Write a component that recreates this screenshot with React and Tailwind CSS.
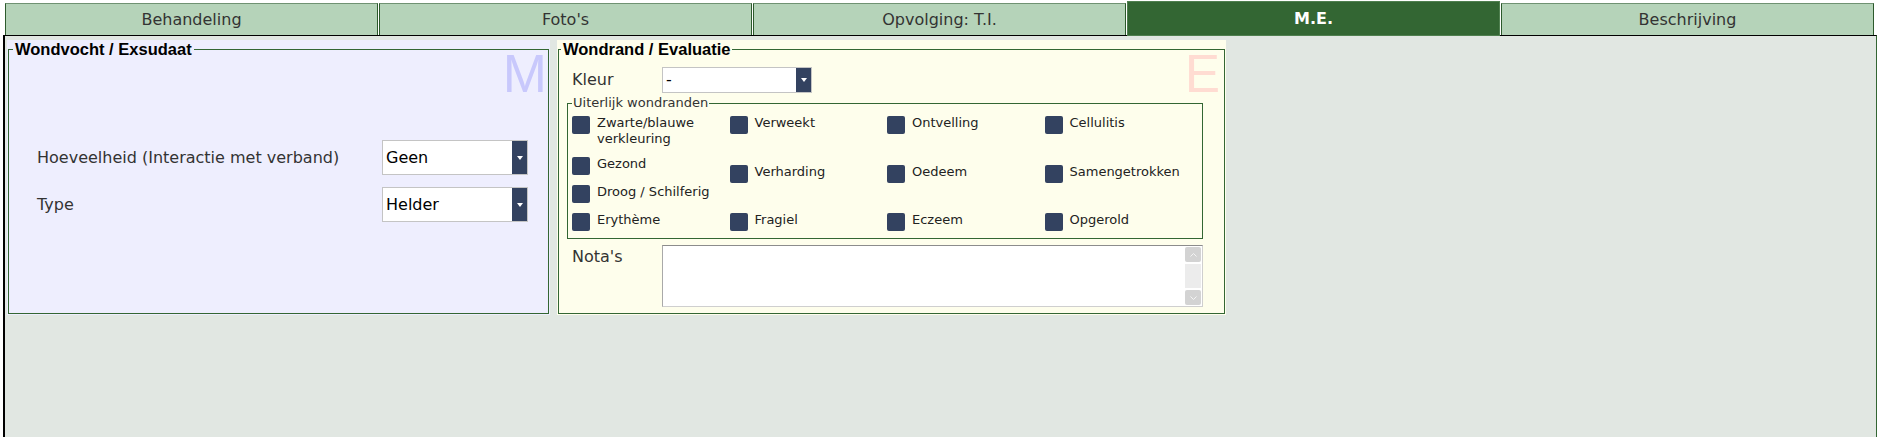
import React from "react";

const tabs = ["Behandeling", "Foto's", "Opvolging: T.I.", "M.E.", "Beschrijving"];
const activeTab = "M.E.";

const font = "font-['DejaVu_Sans',Verdana,sans-serif]";

const Dropdown = ({ value, className }) => (
  <div className={`flex bg-white border border-[#c4c4c4] ${className}`}>
    <span className="flex-1 flex items-center pl-[3px] text-black text-[16px]">{value}</span>
    <span className="w-[15px] bg-[#334260] flex items-center justify-center">
      <svg width="6" height="4" viewBox="0 0 6 4">
        <path d="M0 0h6L3 4z" fill="#fff" />
      </svg>
    </span>
  </div>
);

const Check = ({ label }) => (
  <label className="flex items-start gap-[7px] text-[13px] text-[#222]">
    <span className="mt-px w-[18px] h-[18px] shrink-0 rounded-[2px] bg-[#334260]" />
    <span className="leading-4">{label}</span>
  </label>
);

const columns = [
  ["Zwarte/blauwe verkleuring", "Gezond", "Droog / Schilferig", "Erythème"],
  ["Verweekt", "Verharding", "Fragiel"],
  ["Ontvelling", "Oedeem", "Eczeem"],
  ["Cellulitis", "Samengetrokken", "Opgerold"],
];

const Legend = ({ children }) => (
  <legend className="px-[2px] text-[16.5px] leading-[19px] font-bold text-black font-['Liberation_Sans',Arial,sans-serif]">
    {children}
  </legend>
);

export default function App() {
  return (
    <div className={`h-screen w-full bg-white flex flex-col ${font}`}>
      {/* Tabs */}
      <div className="flex h-[35px] pt-[3px] pl-[5px] pr-[3px] gap-px">
        {tabs.map((t) =>
          t === activeTab ? (
            <div
              key={t}
              className="flex-1 -mt-[2px] -mb-px relative z-10 flex items-center justify-center bg-[#336633] border border-[#4f7f4f] text-white font-bold text-[16px]"
            >
              {t}
            </div>
          ) : (
            <div
              key={t}
              className="flex-1 flex items-center justify-center bg-[#b5d3b9] border-x border-t border-x-[#2c5a2c] border-t-[#6f9272] text-[#333] text-[16px]"
            >
              {t}
            </div>
          )
        )}
      </div>

      {/* Content */}
      <div className="flex-1 ml-[3px] border-l-2 border-t border-r border-l-black border-t-black border-r-[#336633] bg-[#e1e7e2] pl-[2px] pt-[4px]">
        <div className="flex items-stretch gap-[7px]">
          {/* M */}
          <div className="relative w-[543px] bg-[#eeeefe] flex flex-col px-px pb-px">
            <span className="absolute top-[7px] right-[3px] text-[53px] leading-none text-[#c8c8fc] font-['Liberation_Sans',Arial,sans-serif]">
              M
            </span>
            <fieldset className="relative flex-1 border border-[#336633] px-[4px]">
              <Legend>Wondvocht / Exsudaat</Legend>
              <div className="pl-[24px] pt-[81px] flex flex-col gap-[12px] text-[16px] text-[#333]">
                <div className="flex items-center h-[35px]">
                  <span className="w-[345px]">Hoeveelheid (Interactie met verband)</span>
                  <Dropdown value="Geen" className="w-[146px] h-[35px]" />
                </div>
                <div className="flex items-center h-[35px]">
                  <span className="w-[345px]">Type</span>
                  <Dropdown value="Helder" className="w-[146px] h-[35px]" />
                </div>
              </div>
            </fieldset>
          </div>

          {/* E */}
          <div className="relative w-[669px] bg-[#fefeec] flex flex-col px-px pb-px">
            <span className="absolute top-[7px] right-[6px] text-[53px] leading-none text-[#ffdcd2] font-['Liberation_Sans',Arial,sans-serif]">
              E
            </span>
            <fieldset className="relative flex-1 border border-[#336633] px-[2px] pb-[6px]">
              <Legend>Wondrand / Evaluatie</Legend>
              <div className="ml-[6px] mr-[19px]">
                <div className="mt-[8px] flex items-center h-[26px] pl-[5px] text-[16px] text-[#333]">
                  <span className="w-[90px]">Kleur</span>
                  <Dropdown value="-" className="w-[150px] h-[26px]" />
                </div>

                <fieldset className="mt-[2px] border border-[#336633] pl-[4px] pb-[7px]">
                  <legend className="px-px text-[13px] leading-4 text-[#333]">Uiterlijk wondranden</legend>
                  <div className="grid grid-cols-4 pt-[4px]">
                    {columns.map((col, i) => (
                      <div
                        key={i}
                        className={i === 0 ? "flex flex-col gap-[9px]" : "flex flex-col justify-between"}
                      >
                        {col.map((c) => (
                          <Check key={c} label={c} />
                        ))}
                      </div>
                    ))}
                  </div>
                </fieldset>

                <div className="mt-[6px] flex items-start pl-[5px] text-[16px] text-[#333]">
                  <span className="w-[90px]">Nota's</span>
                  <div className="flex-1 h-[62px] flex bg-white border border-[#cfcfcf] border-t-[#8c8c8c] border-l-[#a9a9a9]">
                    <textarea className="flex-1 resize-none outline-none bg-transparent p-[2px] text-[13px]" />
                    <div className="w-[17px] flex flex-col gap-[2px] py-px pr-px">
                      <div className="h-[15px] rounded-[2px] bg-[#d3d3d3] flex items-center justify-center">
                        <svg width="7" height="4" viewBox="0 0 7 4">
                          <path d="M0.5 3.5L3.5 0.5L6.5 3.5" stroke="#f4f4f4" fill="none" />
                        </svg>
                      </div>
                      <div className="flex-1 bg-[#ececec]" />
                      <div className="h-[15px] rounded-[2px] bg-[#d3d3d3] flex items-center justify-center">
                        <svg width="7" height="4" viewBox="0 0 7 4">
                          <path d="M0.5 0.5L3.5 3.5L6.5 0.5" stroke="#f4f4f4" fill="none" />
                        </svg>
                      </div>
                    </div>
                  </div>
                </div>
              </div>
            </fieldset>
          </div>
        </div>
      </div>
    </div>
  );
}
